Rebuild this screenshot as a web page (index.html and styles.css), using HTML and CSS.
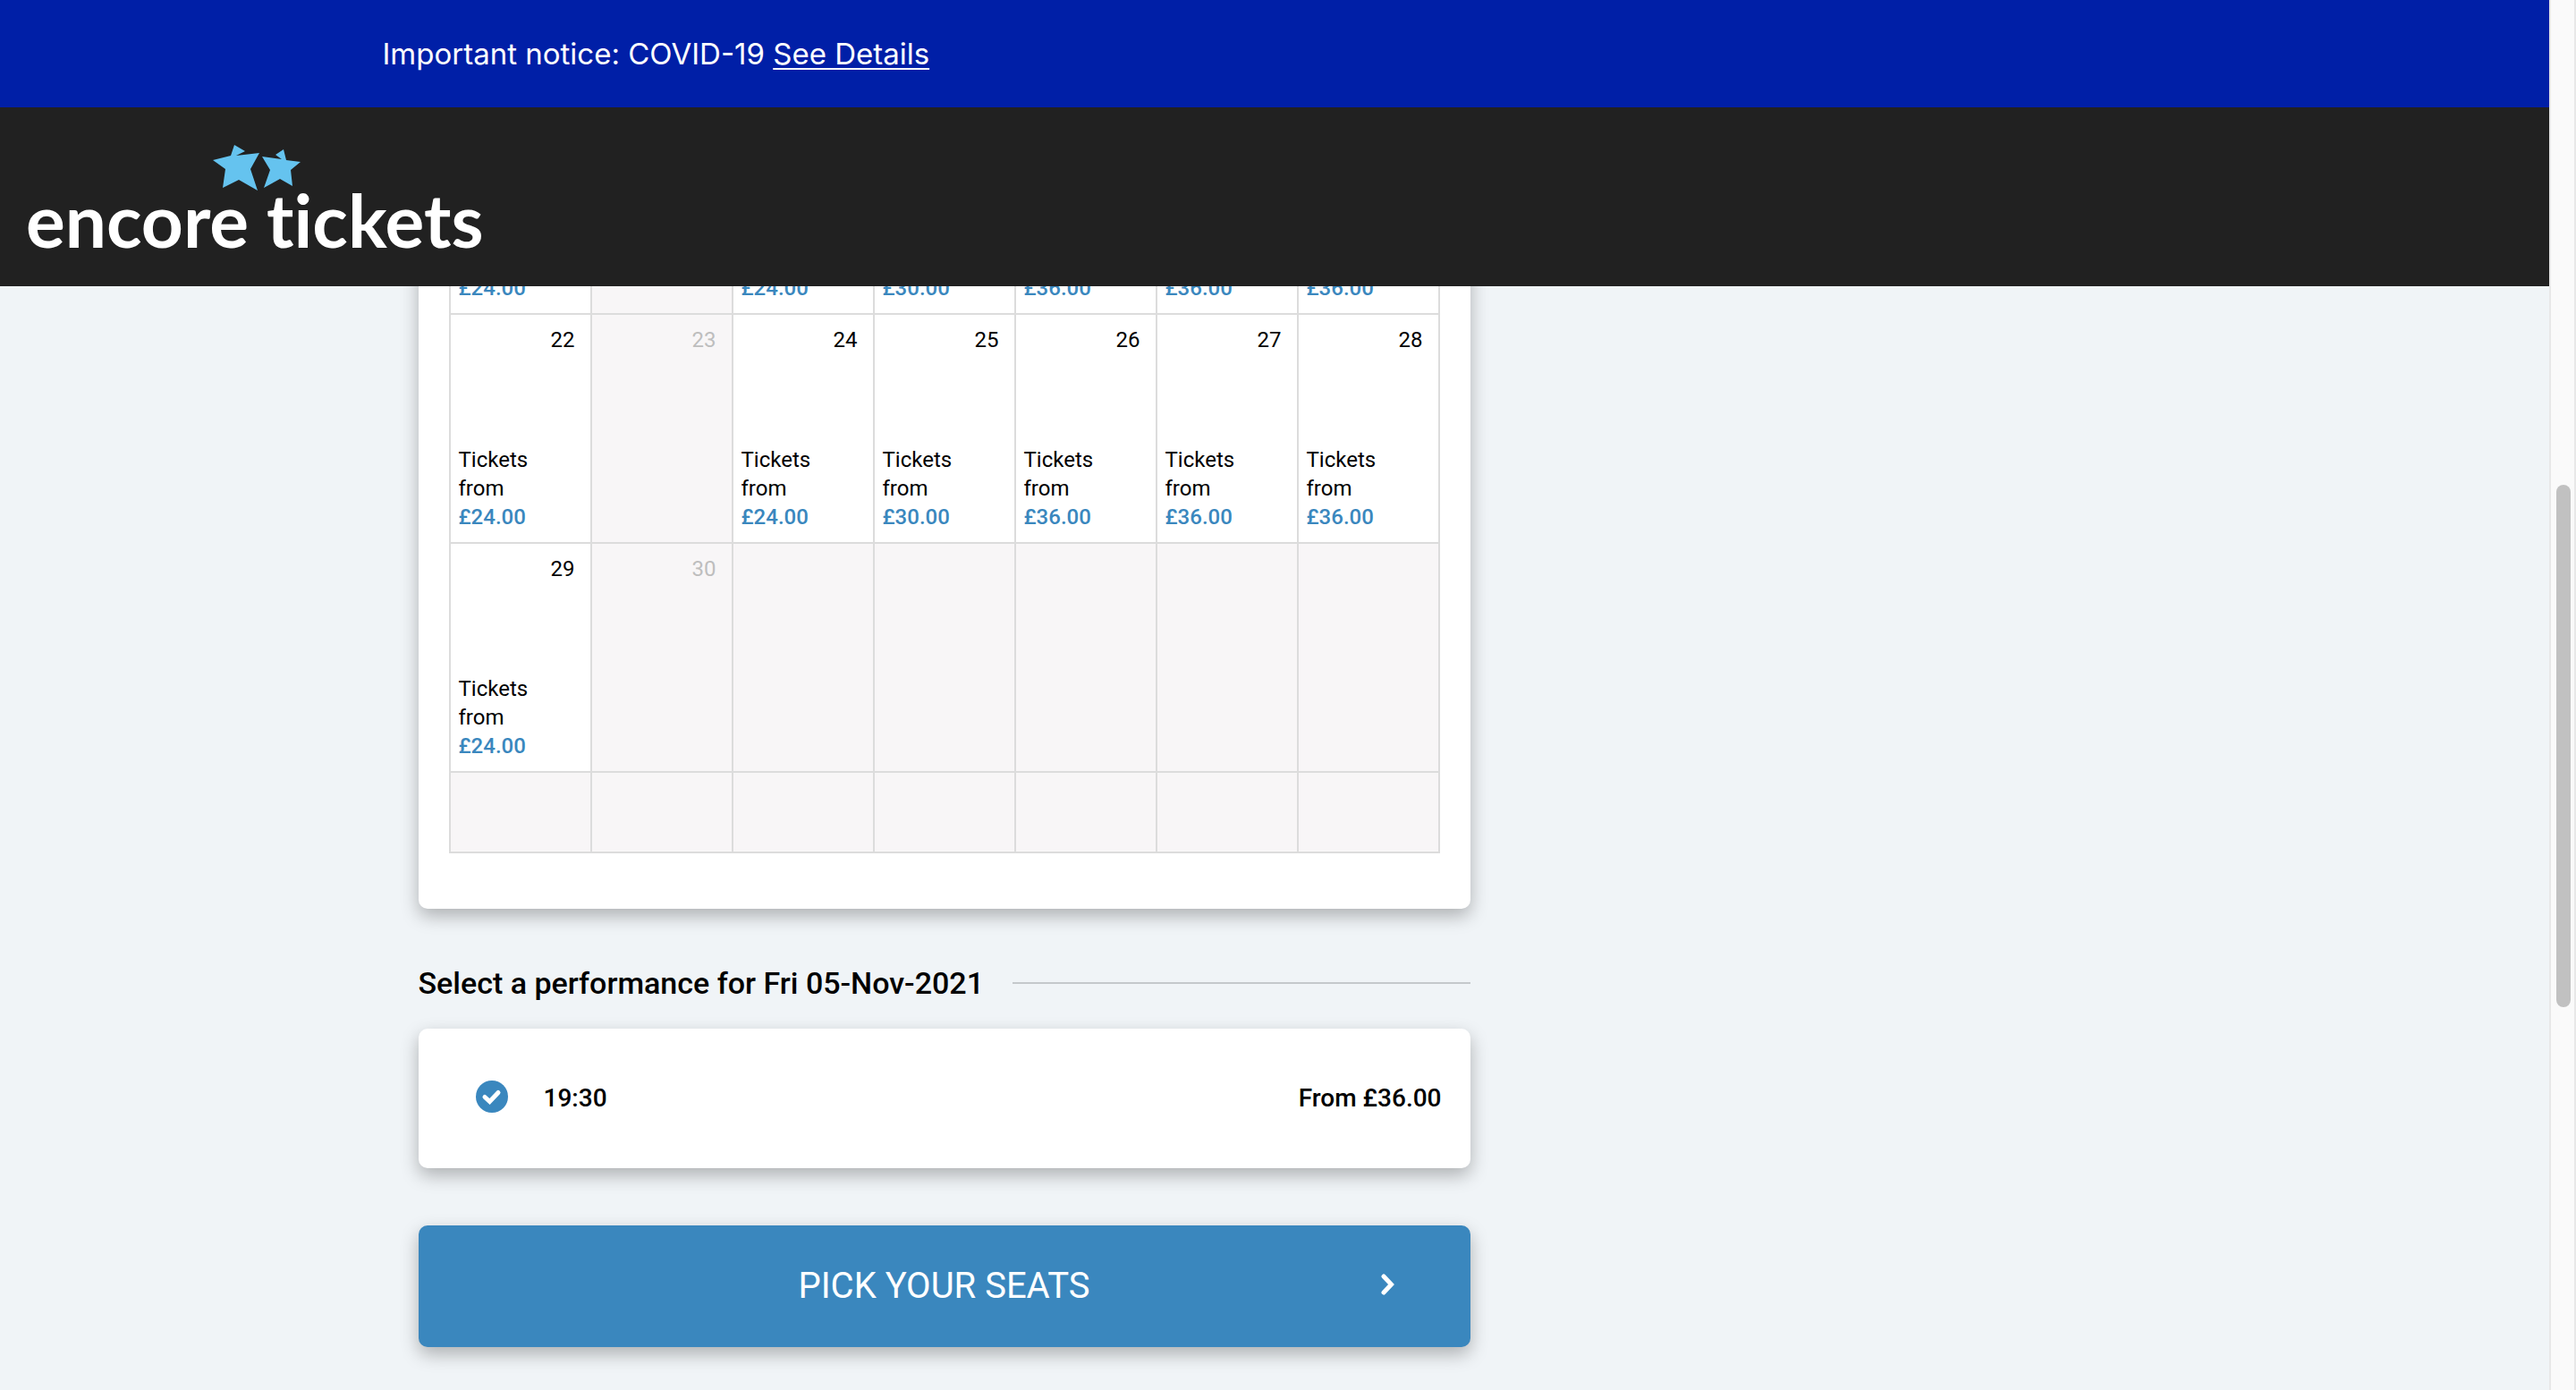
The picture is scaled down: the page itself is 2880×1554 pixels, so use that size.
FILE: index.html
```html
<!DOCTYPE html>
<html lang="en">
<head>
<meta charset="utf-8">
<title>Encore Tickets</title>
<link rel="stylesheet" href="styles.css">
</head>
<body>
<div class="page">
  <div class="notice">
    <p class="notice-text">Important notice: COVID-19 <a href="#details">See Details</a></p>
  </div>
  <header class="header">
    <a class="logo" href="#home">
      <svg class="logo-art" viewBox="24 32 528 152" width="528" height="152" role="img" aria-label="encore tickets">
        <path fill="#65c3ef" d="M262 42L274 49L264 54L290 51L280 69L288 93L267 81L249 90L252 69L238 59L258 54Z"/>
        <path fill="#65c3ef" d="M317 47L308 53L315 58L293 55L302 70L295 90L313 80L327 88L325 70L336 61L320 59Z"/>
        <text class="logo-text" x="29" y="157">encore tickets</text>
      </svg>
    </a>
  </header>
  <main class="main">
    <section class="card calendar-card">
      <table class="calendar" aria-label="November 2021">
        <tbody>
          <tr>
            <td><strong>£24.00</strong></td>
            <td class="off"></td>
            <td><strong>£24.00</strong></td>
            <td><strong>£30.00</strong></td>
            <td><strong>£36.00</strong></td>
            <td><strong>£36.00</strong></td>
            <td><strong>£36.00</strong></td>
          </tr>
          <tr>
            <td><div class="day"><span class="date">22</span><span>Tickets<br>from<strong>£24.00</strong></span></div></td>
            <td class="off"><div class="day"><span class="date">23</span></div></td>
            <td><div class="day"><span class="date">24</span><span>Tickets<br>from<strong>£24.00</strong></span></div></td>
            <td><div class="day"><span class="date">25</span><span>Tickets<br>from<strong>£30.00</strong></span></div></td>
            <td><div class="day"><span class="date">26</span><span>Tickets<br>from<strong>£36.00</strong></span></div></td>
            <td><div class="day"><span class="date">27</span><span>Tickets<br>from<strong>£36.00</strong></span></div></td>
            <td><div class="day"><span class="date">28</span><span>Tickets<br>from<strong>£36.00</strong></span></div></td>
          </tr>
          <tr>
            <td><div class="day"><span class="date">29</span><span>Tickets<br>from<strong>£24.00</strong></span></div></td>
            <td class="off"><div class="day"><span class="date">30</span></div></td>
            <td class="off"></td>
            <td class="off"></td>
            <td class="off"></td>
            <td class="off"></td>
            <td class="off"></td>
          </tr>
          <tr class="spare">
            <td class="off"></td>
            <td class="off"></td>
            <td class="off"></td>
            <td class="off"></td>
            <td class="off"></td>
            <td class="off"></td>
            <td class="off"></td>
          </tr>
        </tbody>
      </table>
    </section>
    <h2 class="heading">Select a performance for Fri 05-Nov-2021</h2>
    <label class="card performance">
      <span class="pick">
        <input class="pick-input" type="radio" name="performance" checked>
        <svg class="pick-tick" viewBox="0 0 36 36" width="36" height="36" aria-hidden="true"><path d="M10 18.500L15.500 23.500L25 13.500" fill="none" stroke="#fff" stroke-width="5" stroke-linecap="round"/></svg>
      </span>
      <span>19:30</span>
      <span class="from">From £36.00</span>
    </label>
    <button class="seats" type="button">
      <span class="seats-label">PICK YOUR SEATS</span>
      <svg viewBox="0 0 16 24" width="16" height="24" aria-hidden="true"><path d="M3 3L11.500 12L3 21" fill="none" stroke="#fff" stroke-width="5" stroke-linecap="round" stroke-linejoin="miter"/></svg>
    </button>
  </main>
</div>
<div class="scrollbar" aria-hidden="true"><div class="thumb"></div></div>
</body>
</html>
```
FILE: styles.css
```css
* { box-sizing: border-box; }

body {
  margin: 0;
  min-height: 100vh;
  display: flex;
  background: #f0f4f7;
  color: #000;
  font-family: Roboto, "Liberation Sans", sans-serif;
  font-size: 24px;
  line-height: 32px;
}

.page { flex: 1; min-width: 0; }

.notice {
  position: relative;
  z-index: 1;
  padding: 40px 15%;
  background: #001fa7;
  color: #fff;
}
.notice-text {
  margin: 0;
  font-family: Inter, sans-serif;
  font-size: 33px;
  line-height: 40px;
}
.notice a { color: inherit; text-underline-offset: 4px; text-decoration-thickness: 2px; }

.header {
  position: relative;
  z-index: 1;
  height: 200px;
  padding: 32px 24px 0;
  background: #212121;
}
.logo { display: inline-block; }
.logo-art { display: block; overflow: visible; }
.logo-text {
  fill: #fff;
  font-family: Lato, sans-serif;
  font-size: 82px;
  font-weight: 700;
  font-variant-ligatures: none;
}

.main {
  width: 70%;
  margin: -62px auto 0;
  padding: 0 40px 48px;
}

.card {
  max-width: 1176px;
  border-radius: 10px;
  background: #fff;
  box-shadow: 0 8px 20px rgba(0, 0, 0, .28);
}

.calendar-card { padding: 34px 34px 62px; }

.calendar {
  width: 100%;
  table-layout: fixed;
  border-collapse: collapse;
}
.calendar td {
  padding: 12px 9px;
  border: 2px solid #dcdcdc;
  vertical-align: top;
}
.calendar strong { display: block; color: #3a87be; font-weight: 500; }
.calendar .off { background: #f8f6f7; color: #bebebe; }
.spare { height: 90px; }

.day {
  display: flex;
  flex-direction: column;
  justify-content: space-between;
  min-height: 230px;
}
.date { padding-right: 8px; text-align: right; }

.heading {
  display: flex;
  align-items: center;
  gap: 32px;
  max-width: 1176px;
  margin: 64px 0 32px;
  font-size: 34px;
  font-weight: 500;
  line-height: 38px;
}
.heading::after { content: ""; flex: 1; height: 2px; background: #c4c8cb; }

.performance {
  display: flex;
  align-items: center;
  min-height: 156px;
  padding: 0 32px 0 64px;
  font-size: 28px;
  font-weight: 500;
}
.pick { display: grid; margin-right: 40px; padding-bottom: 4px; }
.pick-input, .pick-tick { grid-area: 1 / 1; }
.pick-input {
  appearance: none;
  width: 36px;
  height: 36px;
  margin: 0;
  border-radius: 50%;
  background: #3a87be;
}
.pick-tick { pointer-events: none; }
.from { margin-left: auto; }

.seats {
  display: grid;
  grid-template-columns: 100px 1fr 100px;
  align-items: center;
  justify-items: center;
  width: 100%;
  max-width: 1176px;
  min-height: 136px;
  margin-top: 64px;
  padding: 0;
  border: 0;
  border-radius: 10px;
  background: #3a87be;
  box-shadow: 0 8px 20px rgba(0, 0, 0, .28);
  color: #fff;
  font: 400 40px/48px Roboto, "Liberation Sans", sans-serif;
}
.seats-label { grid-column: 2; }
.seats svg { justify-self: start; margin-bottom: 4px; }

.scrollbar {
  width: 30px;
  padding: 542px 4px 0 6px;
  border: solid #e8e8e8;
  border-width: 0 2px;
  background: #fafafa;
}
.thumb { height: 584px; border-radius: 8px; background: #c1c1c1; }
```
